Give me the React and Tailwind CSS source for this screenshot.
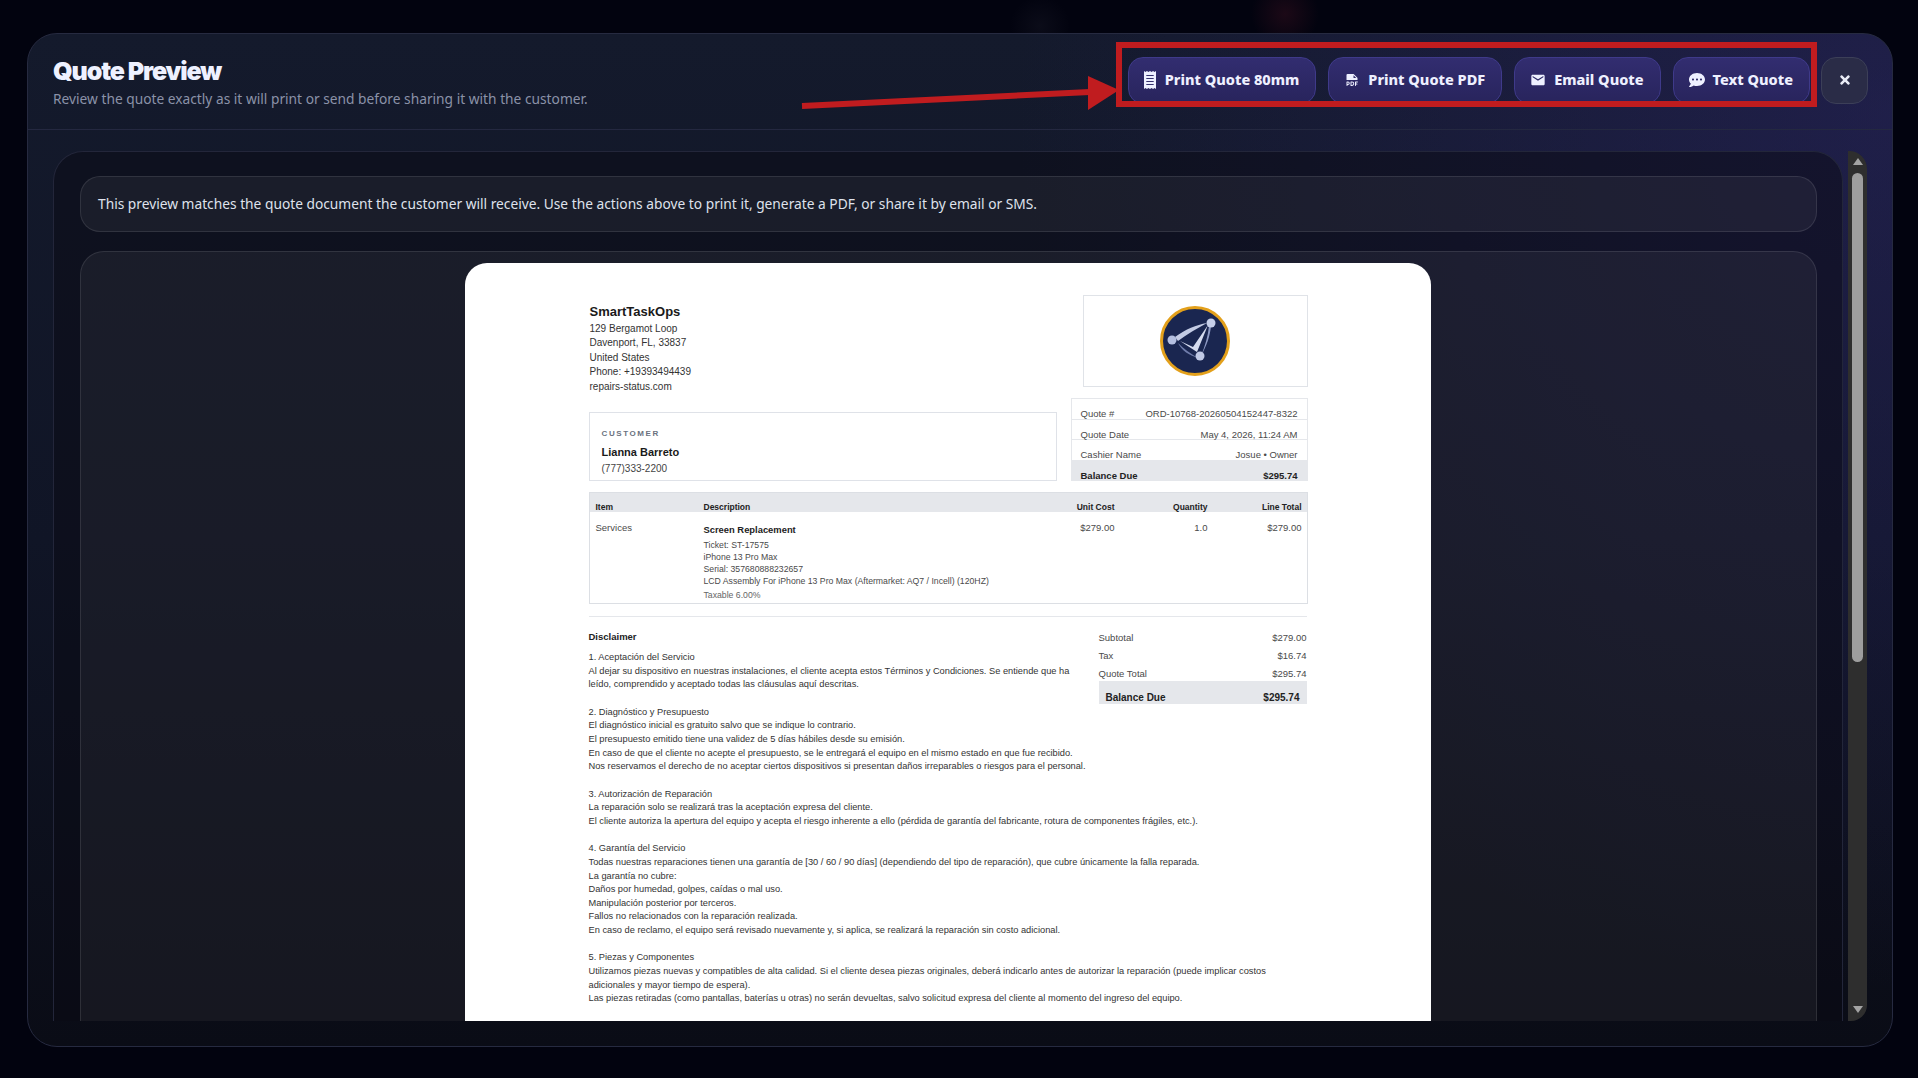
import { FaCommentDots, FaTimes } from "react-icons/fa";
import { MdEmail } from "react-icons/md";
import { PiFilePdfFill } from "react-icons/pi";

const disclaimer = `1. Aceptación del Servicio
Al dejar su dispositivo en nuestras instalaciones, el cliente acepta estos Términos y Condiciones. Se entiende que ha leído, comprendido y aceptado todas las cláusulas aquí descritas.

2. Diagnóstico y Presupuesto
El diagnóstico inicial es gratuito salvo que se indique lo contrario.
El presupuesto emitido tiene una validez de 5 días hábiles desde su emisión.
En caso de que el cliente no acepte el presupuesto, se le entregará el equipo en el mismo estado en que fue recibido.
Nos reservamos el derecho de no aceptar ciertos dispositivos si presentan daños irreparables o riesgos para el personal.

3. Autorización de Reparación
La reparación solo se realizará tras la aceptación expresa del cliente.
El cliente autoriza la apertura del equipo y acepta el riesgo inherente a ello (pérdida de garantía del fabricante, rotura de componentes frágiles, etc.).

4. Garantía del Servicio
Todas nuestras reparaciones tienen una garantía de [30 / 60 / 90 días] (dependiendo del tipo de reparación), que cubre únicamente la falla reparada.
La garantía no cubre:
Daños por humedad, golpes, caídas o mal uso.
Manipulación posterior por terceros.
Fallos no relacionados con la reparación realizada.
En caso de reclamo, el equipo será revisado nuevamente y, si aplica, se realizará la reparación sin costo adicional.

5. Piezas y Componentes
Utilizamos piezas nuevas y compatibles de alta calidad. Si el cliente desea piezas originales, deberá indicarlo antes de autorizar la reparación (puede implicar costos adicionales y mayor tiempo de espera).
Las piezas retiradas (como pantallas, baterías u otras) no serán devueltas, salvo solicitud expresa del cliente al momento del ingreso del equipo.`;

const ReceiptIcon = () => (
  <svg width="12" height="18" viewBox="0 0 13 18" preserveAspectRatio="none" className="shrink-0 mr-px">
    <path
      d="M0 0l1.6 1L3.2 0l1.6 1L6.5 0l1.7 1L9.8 0l1.6 1L13 0v18l-1.6-1-1.6 1-1.6-1-1.7 1-1.7-1-1.6 1-1.6-1L0 18z"
      fill="#eef0ff"
    />
    <path d="M2.5 4.5h8M2.5 7.5h8M2.5 10.5h8M2.5 13.5h8" stroke="#2d2968" strokeWidth="1" />
  </svg>
);

const Logo = () => (
  <svg width="70" height="70" viewBox="0 0 70 70">
    <circle cx="35" cy="35" r="33.5" fill="#1a2650" stroke="#e3a01b" strokeWidth="3" />
    <path d="M15 31C26 23 36 19 47 17C38 22 27 28 18 35z" fill="#c3cbe4" />
    <path d="M20 35L33 41L48 19L37 46z" fill="#d5dbee" />
    <path d="M51 20C50 30 47 39 41 50C45 40 48 30 49 20z" fill="#8e9ac4" />
    <path d="M18 37C24 43 30 47 38 52C29 49 22 45 18 37z" fill="#6f7cab" />
    <circle cx="51" cy="17" r="4.5" fill="#c6cfe9" />
    <circle cx="12" cy="34" r="4.5" fill="#b4bfe0" />
    <circle cx="40" cy="50" r="4.5" fill="#c0c9e6" />
  </svg>
);

const ActionButton = ({ icon, children }) => (
  <button className="h-[47px] flex items-center gap-2 pl-[15px] pr-4 rounded-[15px] border border-[#3f3a8a] bg-[linear-gradient(180deg,#322d70,#28245c)] text-[#eef0ff] text-[14.5px] font-extrabold whitespace-nowrap">
    {icon}
    {children}
  </button>
);

const MetaRow = ({ label, value }) => (
  <div className="h-[20.7px] flex justify-between px-[9px] pt-[9px] leading-[11px] border-b border-[#e5e7eb] text-[#4a4a4a]">
    <span>{label}</span>
    <span>{value}</span>
  </div>
);

const TotalRow = ({ label, value, h }) => (
  <div className={`flex justify-between text-[#4a4a4a] ${h}`}>
    <span>{label}</span>
    <span>{value}</span>
  </div>
);

const QuoteDocument = () => (
  <div className="w-[966px] mr-[2px] bg-white rounded-t-[22px] pt-8 pl-[124px] pr-[123px] font-['Liberation_Sans',Arial,sans-serif] text-[#333333]">
    <div className="flex gap-[14px] h-[186px] mb-[11px]">
      <div className="w-[468px] flex flex-col justify-between">
        <div className="pt-[9px] pl-px">
          <div className="text-[13px] leading-[16px] font-bold text-[#1a1a1a] mb-[2px]">SmartTaskOps</div>
          <div className="text-[10px] leading-[14.4px]">
            129 Bergamot Loop
            <br />
            Davenport, FL, 33837
            <br />
            United States
            <br />
            Phone: +19393494439
            <br />
            repairs-status.com
          </div>
        </div>
        <div className="h-[69px] border border-[#dfe2e8] pl-3 pt-4">
          <div className="text-[8px] leading-[10px] font-bold tracking-[0.2em] text-[#6b7280]">CUSTOMER</div>
          <div className="text-[11px] leading-[13px] font-bold text-[#1a1a1a] mt-[7px]">Lianna Barreto</div>
          <div className="text-[10px] leading-[12px] mt-[4px] text-[#444444]">(777)333-2200</div>
        </div>
      </div>
      <div className="w-[237px] flex flex-col items-end justify-between">
        <div className="w-[225px] h-[92px] border border-[#e0e3e8] flex items-center justify-center">
          <Logo />
        </div>
        <div className="w-full h-[83px] border border-b-0 border-[#e5e7eb] text-[9.5px] overflow-hidden">
          <MetaRow label="Quote #" value="ORD-10768-20260504152447-8322" />
          <MetaRow label="Quote Date" value="May 4, 2026, 11:24 AM" />
          <MetaRow label="Cashier Name" value="Josue • Owner" />
          <div className="h-[21px] bg-[#e5e7eb] flex justify-between px-[9px] pt-[9px] leading-[11px] font-bold text-[#222222]">
            <span>Balance Due</span>
            <span>$295.74</span>
          </div>
        </div>
      </div>
    </div>

    <div className="w-[719px] h-[112px] border border-[#dcdfe4]">
      <div className="grid grid-cols-[114px_1fr_93px_93px_99px] h-[19px] bg-[#e5e7eb] text-[8.5px] leading-[11px] font-bold text-[#222222] pt-[9px]">
        <span className="pl-[6px]">Item</span>
        <span>Description</span>
        <span className="text-right">Unit Cost</span>
        <span className="text-right">Quantity</span>
        <span className="text-right pr-[5px]">Line Total</span>
      </div>
      <div className="grid grid-cols-[114px_1fr_93px_93px_99px] text-[9.5px] leading-[11px] pt-[10px] text-[#4a4a4a]">
        <span className="pl-[6px]">Services</span>
        <div>
          <div className="font-bold text-[#222222] text-[9.4px] leading-[11px] mb-[4px] pt-[2px]">Screen Replacement</div>
          <div className="text-[8.7px] leading-[12px]">
            <div>Ticket: ST-17575</div>
            <div>iPhone 13 Pro Max</div>
            <div>Serial: 357680888232657</div>
            <div>LCD Assembly For iPhone 13 Pro Max (Aftermarket: AQ7 / Incell) (120HZ)</div>
          </div>
          <div className="text-[8.7px] leading-[11px] mt-[3px] text-[#666666]">Taxable 6.00%</div>
        </div>
        <span className="text-right">$279.00</span>
        <span className="text-right">1.0</span>
        <span className="text-right pr-[5px]">$279.00</span>
      </div>
    </div>

    <div className="w-[718px] mt-3 border-t border-[#e5e7eb] pt-[14px]">
      <div className="float-right w-[208px] ml-3 text-[9.5px] leading-[11px] mt-[1px]">
        <TotalRow label="Subtotal" value="$279.00" h="h-[18px]" />
        <TotalRow label="Tax" value="$16.74" h="h-[17.5px]" />
        <TotalRow label="Quote Total" value="$295.74" h="h-[13px]" />
        <div className="h-[23px] bg-[#e5e7eb] flex justify-between items-end pb-[1px] px-[7px] text-[10px] font-bold text-[#222222]">
          <span>Balance Due</span>
          <span>$295.74</span>
        </div>
      </div>
      <div className="text-[9.5px] leading-[12px] font-bold text-[#222222] mb-[8px]">Disclaimer</div>
      <div className="text-[9.27px] leading-[13.65px] whitespace-pre-line">{disclaimer}</div>
    </div>
  </div>
);

const Scrollbar = () => (
  <div className="w-[19px] ml-[5px] shrink-0 bg-[#2e2e2e] rounded-tr-[18px] rounded-br-[16px] flex flex-col items-center">
    <div className="mt-[7px] w-0 h-0 border-x-[5px] border-x-transparent border-b-[7px] border-b-[#a3a3a3]" />
    <div className="mt-[8px] w-[11px] h-[489px] rounded-full bg-[#9e9e9e]" />
    <div className="mt-auto mb-[8px] w-0 h-0 border-x-[5px] border-x-transparent border-t-[7px] border-t-[#a3a3a3]" />
  </div>
);

export default function App() {
  return (
    <div className="relative w-[1918px] h-[1078px] overflow-hidden bg-[#02030f] bg-[radial-gradient(circle_at_1285px_14px,rgba(120,30,50,0.22),transparent_34px),radial-gradient(circle_at_1040px_26px,rgba(90,90,110,0.1),transparent_30px)] pt-[33px] pl-[27px] font-['Noto_Sans',sans-serif]">
      <div className="w-[1866px] h-[1014px] flex flex-col rounded-[30px] border border-[#262a40] overflow-hidden bg-[radial-gradient(circle_at_100%_8%,rgba(46,38,110,0.45),transparent_42%),linear-gradient(180deg,#141a2c_0%,#101526_50%,#0a0c16_100%)]">
        <header className="h-[96px] shrink-0 flex items-center justify-between pl-[25px] pr-[24px] pb-[3px] border-b border-[#242840]">
          <div className="pt-[5px]">
            <h1 className="font-['Inter',sans-serif] text-[25px] leading-[30px] font-black tracking-[-0.045em] text-[#eef1ff]">
              Quote Preview
            </h1>
            <p className="text-[13.75px] leading-[20px] text-[#8b92a8] mt-[3px]">
              Review the quote exactly as it will print or send before sharing it with the customer.
            </p>
          </div>
          <div className="flex items-center gap-3">
            <ActionButton icon={<ReceiptIcon />}>Print Quote 80mm</ActionButton>
            <ActionButton icon={<PiFilePdfFill className="w-4 h-[19px] shrink-0" />}>Print Quote PDF</ActionButton>
            <ActionButton icon={<MdEmail className="w-4 h-4 shrink-0" />}>Email Quote</ActionButton>
            <ActionButton icon={<FaCommentDots className="w-4 h-4 shrink-0" />}>Text Quote</ActionButton>
            <button className="w-[47px] h-[47px] ml-[-1px] flex items-center justify-center rounded-[15px] border border-[#3c3f58] bg-[#2a2c47] text-[#e8eaf5]">
              <FaTimes className="w-[14px] h-[14px]" />
            </button>
          </div>
        </header>

        <div className="flex pl-[25px] pr-[25px] pt-[21px] mb-[25px] flex-1 min-h-0">
          <div className="flex-1 min-w-0 rounded-t-[30px] border border-b-0 border-[#23263a] bg-[#0a0a14]/50 pl-[26px] pr-[25px] pt-[24px] overflow-hidden">
            <div className="h-[56px] flex items-center pl-[17px] rounded-[20px] border border-white/10 bg-white/5 text-[13.75px] text-[#dfe2ec]">
              This preview matches the quote document the customer will receive. Use the actions above to print it, generate a PDF, or share it by email or SMS.
            </div>
            <div className="mt-[19px] h-full flex justify-center pt-[11px] rounded-t-[24px] border border-b-0 border-white/10 bg-white/5">
              <QuoteDocument />
            </div>
          </div>
          <Scrollbar />
        </div>
      </div>

      {/* annotation drawn over the header */}
      <svg className="absolute left-0 top-0 pointer-events-none" width="1918" height="140" viewBox="0 0 1918 140">
        <rect x="1119" y="45" width="695" height="59" fill="none" stroke="#c01c1f" strokeWidth="6" />
        <path d="M802 106L1090 92" stroke="#c01c1f" strokeWidth="6" />
        <path d="M1088 76L1119 90L1088 110z" fill="#c01c1f" />
      </svg>
    </div>
  );
}
